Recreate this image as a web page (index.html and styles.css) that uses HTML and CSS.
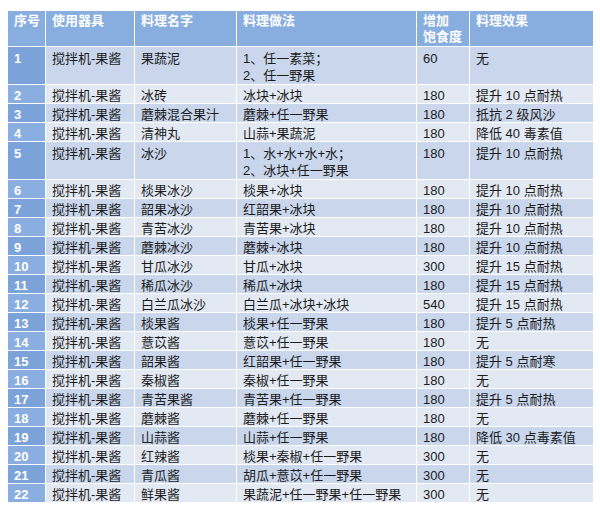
FILE: index.html
```html
<!DOCTYPE html>
<html lang="zh">
<head>
<meta charset="utf-8">
<link rel="stylesheet" href="styles.css">
</head>
<body>
<table class="recipes">
<colgroup>
<col class="c-no"><col class="c-tool"><col class="c-name"><col class="c-method"><col class="c-food"><col class="c-effect">
</colgroup>
<thead>
<tr><th>序号</th><th>使用器具</th><th>料理名字</th><th>料理做法</th><th>增加<br>饱食度</th><th>料理效果</th></tr>
</thead>
<tbody>
<tr class="multi"><td>1</td><td>搅拌机-果酱</td><td>果蔬泥</td><td>1、任一素菜；<br>2、任一野果</td><td>60</td><td>无</td></tr>
<tr><td>2</td><td>搅拌机-果酱</td><td>冰砖</td><td>冰块+冰块</td><td>180</td><td>提升 10 点耐热</td></tr>
<tr><td>3</td><td>搅拌机-果酱</td><td>蘑棘混合果汁</td><td>蘑棘+任一野果</td><td>180</td><td>抵抗 2 级风沙</td></tr>
<tr><td>4</td><td>搅拌机-果酱</td><td>清神丸</td><td>山蒜+果蔬泥</td><td>180</td><td>降低 40 毒素值</td></tr>
<tr class="multi"><td>5</td><td>搅拌机-果酱</td><td>冰沙</td><td>1、水+水+水+水；<br>2、冰块+任一野果</td><td>180</td><td>提升 10 点耐热</td></tr>
<tr><td>6</td><td>搅拌机-果酱</td><td>棪果冰沙</td><td>棪果+冰块</td><td>180</td><td>提升 10 点耐热</td></tr>
<tr><td>7</td><td>搅拌机-果酱</td><td>韶果冰沙</td><td>红韶果+冰块</td><td>180</td><td>提升 10 点耐热</td></tr>
<tr><td>8</td><td>搅拌机-果酱</td><td>青苦冰沙</td><td>青苦果+冰块</td><td>180</td><td>提升 10 点耐热</td></tr>
<tr><td>9</td><td>搅拌机-果酱</td><td>蘑棘冰沙</td><td>蘑棘+冰块</td><td>180</td><td>提升 10 点耐热</td></tr>
<tr><td>10</td><td>搅拌机-果酱</td><td>甘瓜冰沙</td><td>甘瓜+冰块</td><td>300</td><td>提升 15 点耐热</td></tr>
<tr><td>11</td><td>搅拌机-果酱</td><td>稀瓜冰沙</td><td>稀瓜+冰块</td><td>180</td><td>提升 15 点耐热</td></tr>
<tr><td>12</td><td>搅拌机-果酱</td><td>白兰瓜冰沙</td><td>白兰瓜+冰块+冰块</td><td>540</td><td>提升 15 点耐热</td></tr>
<tr><td>13</td><td>搅拌机-果酱</td><td>棪果酱</td><td>棪果+任一野果</td><td>180</td><td>提升 5 点耐热</td></tr>
<tr><td>14</td><td>搅拌机-果酱</td><td>薏苡酱</td><td>薏苡+任一野果</td><td>180</td><td>无</td></tr>
<tr><td>15</td><td>搅拌机-果酱</td><td>韶果酱</td><td>红韶果+任一野果</td><td>180</td><td>提升 5 点耐寒</td></tr>
<tr><td>16</td><td>搅拌机-果酱</td><td>秦椒酱</td><td>秦椒+任一野果</td><td>180</td><td>无</td></tr>
<tr><td>17</td><td>搅拌机-果酱</td><td>青苦果酱</td><td>青苦果+任一野果</td><td>180</td><td>提升 5 点耐热</td></tr>
<tr><td>18</td><td>搅拌机-果酱</td><td>蘑棘酱</td><td>蘑棘+任一野果</td><td>180</td><td>无</td></tr>
<tr><td>19</td><td>搅拌机-果酱</td><td>山蒜酱</td><td>山蒜+任一野果</td><td>180</td><td>降低 30 点毒素值</td></tr>
<tr><td>20</td><td>搅拌机-果酱</td><td>红辣酱</td><td>棪果+秦椒+任一野果</td><td>300</td><td>无</td></tr>
<tr><td>21</td><td>搅拌机-果酱</td><td>青瓜酱</td><td>胡瓜+薏苡+任一野果</td><td>300</td><td>无</td></tr>
<tr><td>22</td><td>搅拌机-果酱</td><td>鲜果酱</td><td>果蔬泥+任一野果+任一野果</td><td>300</td><td>无</td></tr>
</tbody>
</table>
</body>
</html>
```

FILE: styles.css
```css
html, body {
  margin: 0;
  padding: 0;
  background: #ffffff;
}

body {
  font-family: "Liberation Sans", "Noto Sans CJK SC", sans-serif;
  font-size: 13px;
  color: #1c1c1c;
}

.recipes {
  margin: 10px 0 0 7px;
  width: 586px;
  table-layout: fixed;
  border-collapse: collapse;
}

.c-no { width: 38px; }
.c-tool { width: 89px; }
.c-name { width: 102px; }
.c-method { width: 180px; }
.c-food { width: 53px; }
.c-effect { width: 124px; }

.recipes th,
.recipes td {
  border: 1px solid #ffffff;
  text-align: left;
  vertical-align: top;
  white-space: nowrap;
  overflow: hidden;
}

.recipes th {
  background: #88aedf;
  color: #ffffff;
  font-weight: bold;
  line-height: 16px;
  padding: 2px 6px 0 6px;
  height: 33px;
}

.recipes td {
  line-height: 15px;
  padding: 3px 6px 0 6px;
  background: #c9d6ec;
}

.recipes tr.multi td {
  line-height: 17px;
}

.recipes tbody tr:nth-child(even) td {
  background: #e3e9f3;
}

.recipes td:first-child {
  background: #7ba3da;
  color: #ffffff;
  font-weight: bold;
}

.recipes tbody tr:nth-child(even) td:first-child {
  background: #8aaedf;
}
```
